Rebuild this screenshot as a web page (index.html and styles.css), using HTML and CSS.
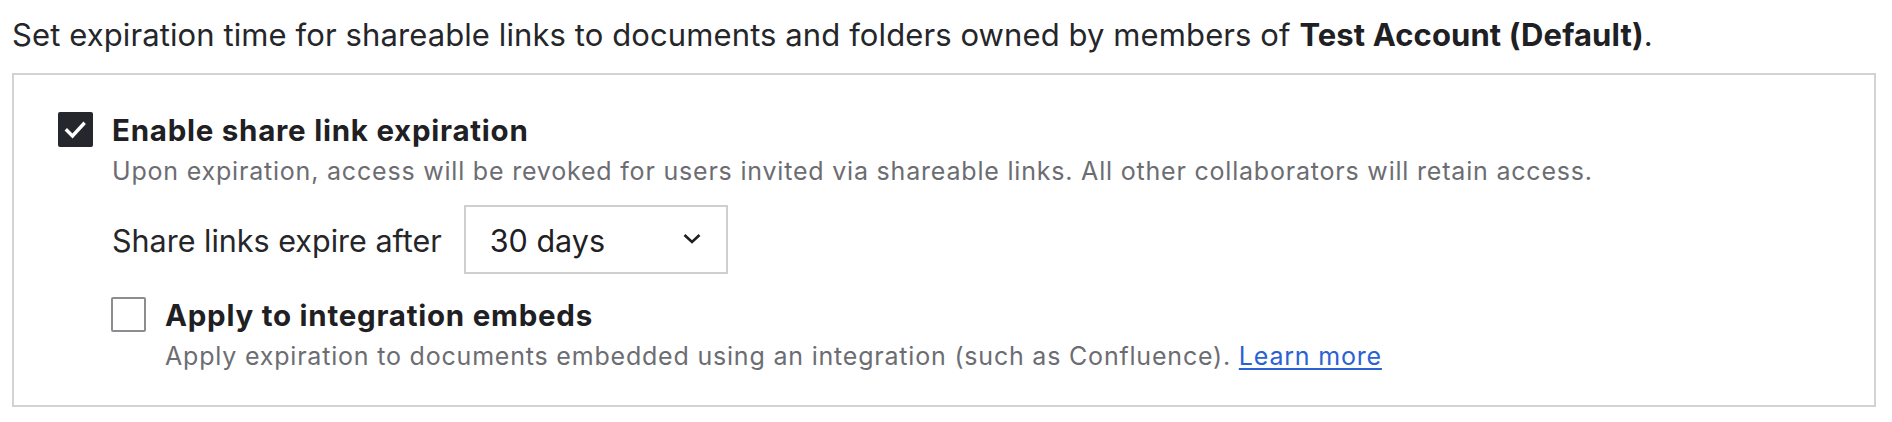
FILE: index.html
```html
<!DOCTYPE html>
<html lang="en">
<head>
<meta charset="utf-8">
<title>Share link expiration</title>
<link rel="stylesheet" href="styles.css">
</head>
<body>
<div class="page">
  <p class="intro">Set expiration time for shareable links to documents and folders owned by members of <strong>Test Account (Default)</strong>.</p>
  <div class="panel">
    <div class="option">
      <span class="checkbox checked">
        <svg width="35" height="35" viewBox="0 0 35 35"><path d="M9 18.5 L14.5 24 L25.5 12" fill="none" stroke="#fff" stroke-width="3.4" stroke-linecap="square"/></svg>
      </span>
      <div class="option-body">
        <div class="option-title">Enable share link expiration</div>
        <div class="option-desc">Upon expiration, access will be revoked for users invited via shareable links. All other collaborators will retain access.</div>
        <div class="expire-row">
          <span class="expire-label">Share links expire after</span>
          <div class="select">
            <span class="select-value">30 days</span>
            <svg class="chevron" width="20" height="11" viewBox="0 0 20 11"><path d="M2.5 2 L10 9 L17.5 2" fill="none" stroke="#1f2024" stroke-width="2.6"/></svg>
          </div>
        </div>
        <div class="option sub-option">
          <span class="checkbox"></span>
          <div class="option-body">
            <div class="option-title">Apply to integration embeds</div>
            <div class="option-desc">Apply expiration to documents embedded using an integration (such as Confluence). <a href="#" class="link">Learn more</a></div>
          </div>
        </div>
      </div>
    </div>
  </div>
</div>
</body>
</html>
```
FILE: styles.css
```css
html, body {
  margin: 0;
  padding: 0;
  background: #ffffff;
}

body {
  font-family: "Inter", "Liberation Sans", sans-serif;
  color: #222327;
}

.page {
  padding: 0 16px 0 12px;
}

.intro {
  margin: 15px 0 18px;
  font-size: 31px;
  line-height: 40px;
  letter-spacing: 0.1px;
  color: #25262a;
}

.intro strong {
  font-weight: 700;
  color: #1f2024;
}

.panel {
  border: 2px solid #d3d2d7;
  padding: 34px 0 33px 44px;
}

.option {
  display: flex;
  align-items: flex-start;
  gap: 19px;
}

.checkbox {
  flex: none;
  box-sizing: border-box;
  width: 35px;
  height: 35px;
  margin-top: 3px;
  border: 2px solid #8d8d91;
  border-radius: 2px;
  background: #fff;
}

.checkbox.checked {
  border: none;
  background: #26272c;
}

.checkbox svg {
  display: block;
}

.option-body {
  display: flex;
  flex-direction: column;
}

.option-title {
  padding-top: 3px;
  font-size: 29.5px;
  line-height: 36px;
  font-weight: 700;
  letter-spacing: 0.75px;
  color: #1f2024;
}

.option-desc {
  margin-top: 7px;
  font-size: 25px;
  line-height: 32px;
  letter-spacing: 0.8px;
  color: #6c6d72;
}

.link {
  color: #2a62d2;
  text-decoration: underline;
  text-underline-offset: 3px;
  text-decoration-thickness: 2px;
}

.expire-row {
  display: flex;
  align-items: baseline;
  gap: 22px;
  margin-top: 18px;
}

.expire-label {
  font-size: 30.5px;
  line-height: 40px;
  color: #25262a;
}

.select {
  box-sizing: border-box;
  width: 264px;
  height: 69px;
  border: 2px solid #cfced2;
  padding: 14px 24px 11px 24px;
  display: flex;
  align-items: center;
  justify-content: space-between;
}

.select-value {
  font-size: 30.5px;
  line-height: 40px;
  color: #1f2024;
}

.chevron {
  display: block;
  margin-bottom: 5px;
}

.sub-option {
  margin-top: 20px;
  margin-left: -1px;
}
```
